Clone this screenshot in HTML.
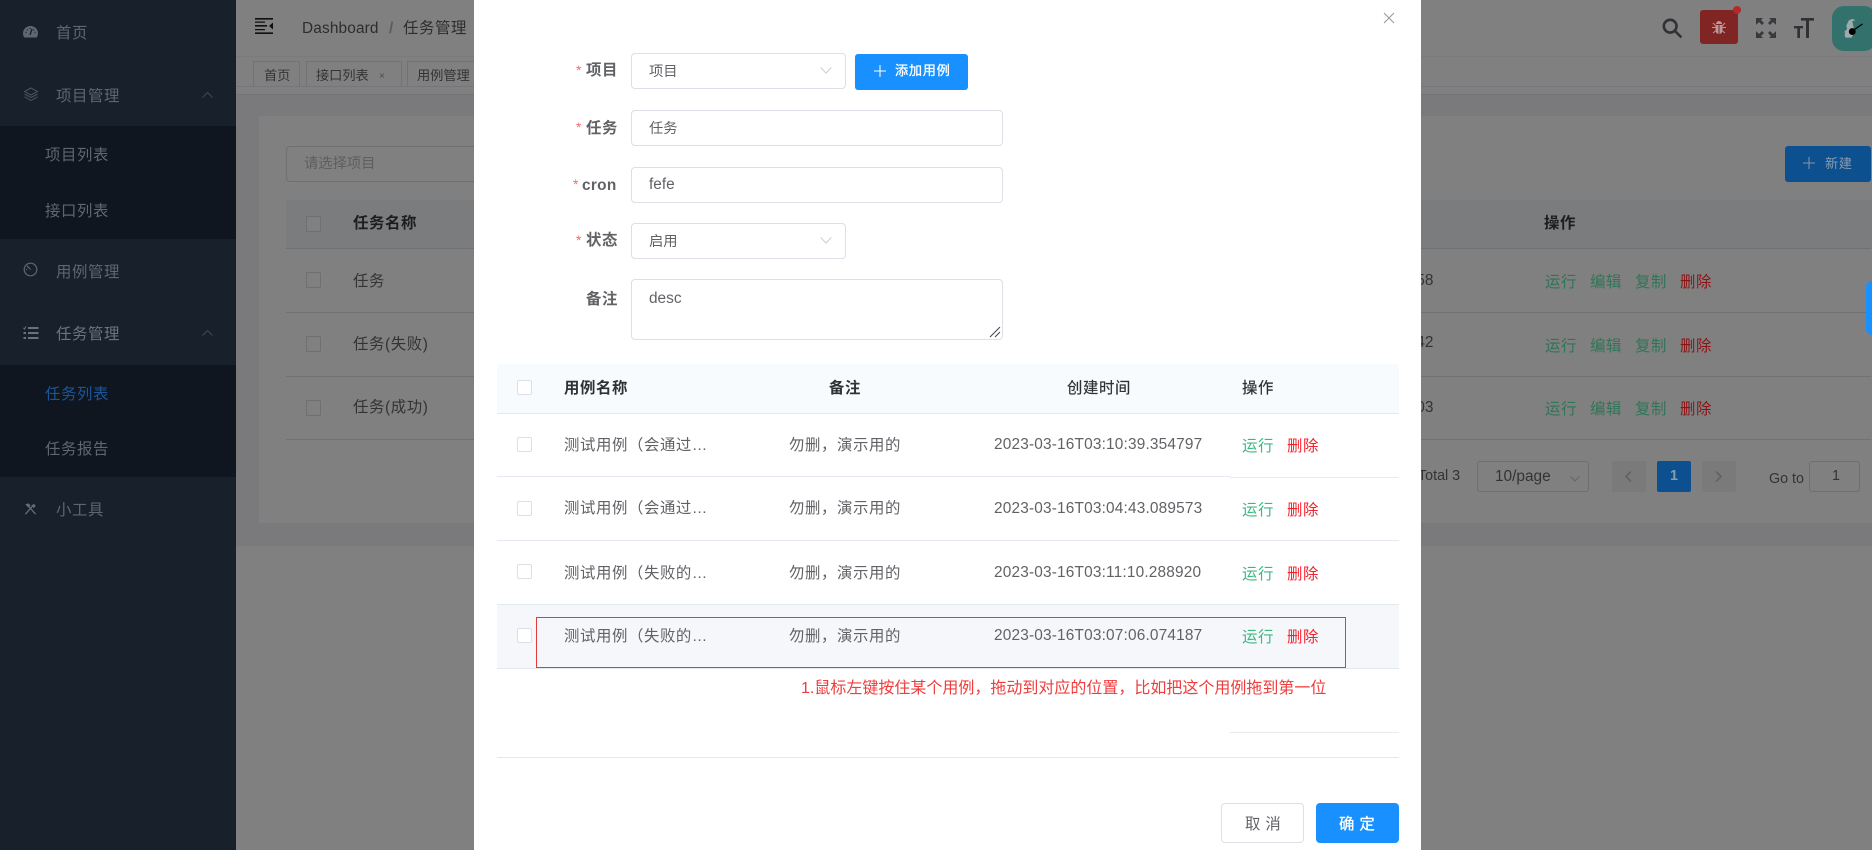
<!DOCTYPE html>
<html><head><meta charset="utf-8"><style>
*{box-sizing:border-box}
html,body{margin:0;padding:0;width:1872px;height:850px;overflow:hidden;background:#808080;font-family:"Liberation Sans","Noto Sans CJK SC",sans-serif}
.b{position:absolute}
.t{position:absolute;white-space:nowrap;line-height:20px;font-size:15.4px;letter-spacing:.6px}
.n{letter-spacing:0}
svg{position:absolute;overflow:visible}
.nav{color:#5e6670}
.cb{position:absolute;width:15px;height:16px;border:1px solid #6f6f73;border-radius:2px;background:#808080}
.mcb{position:absolute;width:15px;height:15px;border:1px solid #dcdfe6;border-radius:2px;background:#fff}
.g{color:#2f7558}.r{color:#8f1212}
.mg{color:#3cb87f}.mr{color:#f5222d}
.bt{color:#2d2d2e}
.m{color:#606266}
.d{letter-spacing:.18px}
.h{color:#303133;font-weight:700}
.inp{position:absolute;border:1px solid #dcdfe6;border-radius:4px;background:#fff}
.ml{color:#606266;font-weight:700}
.st{color:#f56c6c;font-size:14px;letter-spacing:0}
</style></head><body>

<!-- sidebar -->
<div class="b" style="left:0;top:0;width:236px;height:850px;background:#18202c"></div>
<div class="b" style="left:0;top:126px;width:236px;height:113px;background:#0f161f"></div>
<div class="b" style="left:0;top:365px;width:236px;height:112px;background:#0f161f"></div>
<svg style="left:23px;top:26px" width="15" height="12" viewBox="0 0 15 12"><path fill="#5f6770" d="M7.5 0C3.4 0 0 3.2 0 7.3c0 1.400.4 2.700 1 3.700.2.300.6.500 1 .500h11c.4 0 .8-.2 1-.5.600-1 1-2.300 1-3.700C15 3.200 11.600 0 7.500 0z"/><path stroke="#18202c" stroke-width="1.300" fill="none" d="M7 9 9 3M2.500 6.500h1M4 3.500l.7.700M7.200 2v1M11 3.500l-.7.700M12.500 6.500h-1"/></svg>
<div class="t nav" style="left:56px;top:24px">首页</div>
<svg style="left:24px;top:87px" width="14" height="15" viewBox="0 0 14 15" fill="none" stroke="#4a525c" stroke-width="1"><path d="M7 1 13.500 4.500 7 8 .5 4.500zM.5 7 7 10.500 13.500 7M.5 9.800 7 13.500l6.500-3.700"/></svg>
<div class="t nav" style="left:56px;top:87px">项目管理</div>
<svg style="left:202px;top:92px" width="11" height="6" viewBox="0 0 11 6" fill="none" stroke="#3f4751"><path d="M.5 5.500 5.500.5l5 5"/></svg>
<div class="t nav" style="left:45px;top:146px">项目列表</div>
<div class="t nav" style="left:45px;top:202px">接口列表</div>
<svg style="left:23px;top:262px" width="15" height="15" viewBox="0 0 15 15" fill="none" stroke="#5f6770" stroke-width="1.200"><circle cx="7.500" cy="7.500" r="6.300"/><path d="M4 3.800 7.500 7.500M3 7.500h1"/></svg>
<div class="t nav" style="left:56px;top:263px">用例管理</div>
<svg style="left:23px;top:326px" width="16" height="14" viewBox="0 0 16 14"><path fill="#6a727c" d="M5 1h10.500v2H5zM5 6h10.500v2H5zM5 11h10.500v2H5zM.5 6h2.500v2H.5zM.5 11h2.500v2H.5z"/><path fill="none" stroke="#6a727c" d="M.5 1.800 1.500 3 3 .5"/></svg>
<div class="t nav" style="left:56px;top:325px;color:#6c747f">任务管理</div>
<svg style="left:202px;top:330px" width="11" height="6" viewBox="0 0 11 6" fill="none" stroke="#3f4751"><path d="M.5 5.500 5.500.5l5 5"/></svg>
<div class="t" style="left:45px;top:385px;color:#1c5699">任务列表</div>
<div class="t nav" style="left:45px;top:440px">任务报告</div>
<svg style="left:24px;top:503px" width="13" height="12" viewBox="0 0 14 14" fill="none" stroke="#666e78" stroke-width="1.500"><path d="M1 13 9 4M13 13 4 3"/><path d="M1 1.500 5 .5 7 3 4 5zM8 3l3-2 2 2-2 3z" fill="#666e78" stroke="none"/></svg>
<div class="t nav" style="left:56px;top:501px">小工具</div>

<!-- topbar -->
<div class="b" style="left:236px;top:56px;width:1636px;height:1px;background:#7b7b7b"></div>
<svg style="left:255px;top:18px" width="18" height="16" viewBox="0 0 18 16"><path fill="#111" d="M0 0h18v1.600H0zM0 7h12v1.600H0zM0 14.400h18V16H0zM0 3.500h10v1.300H0zM0 11h10v1.300H0zM18 4.500v7l-4-3.500z"/></svg>
<div class="t bt" style="left:302px;top:19px;letter-spacing:.15px">Dashboard</div>
<div class="t n" style="left:389px;top:19px;color:#5c5c5e;font-weight:700">/</div>
<div class="t bt" style="left:403px;top:19px">任务管理</div>
<div class="b" style="left:236px;top:86px;width:1636px;height:1px;background:#767678"></div>
<div class="b" style="left:253px;top:61px;width:47px;height:26px;border:1px solid #737377;border-bottom:0"></div>
<div class="t n" style="left:264px;top:66px;font-size:13.200px;color:#343434">首页</div>
<div class="b" style="left:306px;top:61px;width:96px;height:26px;border:1px solid #737377;border-bottom:0"></div>
<div class="t n" style="left:316px;top:66px;font-size:13.200px;color:#343434">接口列表</div>
<div class="t n" style="left:379px;top:67px;font-size:10px;color:#4a4a4a">×</div>
<div class="b" style="left:407px;top:61px;width:80px;height:26px;border:1px solid #737377;border-bottom:0"></div>
<div class="t n" style="left:417px;top:66px;font-size:13.200px;color:#343434">用例管理</div>
<div class="b" style="left:236px;top:94px;width:1636px;height:1px;background:#727278"></div>
<div class="b" style="left:236px;top:95px;width:1636px;height:451px;background:#7a7a7c"></div>
<div class="b" style="left:259px;top:116px;width:1613px;height:407px;background:#808080"></div>

<!-- top right -->
<svg style="left:1662px;top:18px" width="20" height="20" viewBox="0 0 22 22" fill="none" stroke="#2f3135" stroke-width="2.800"><circle cx="9" cy="9" r="7"/><path d="M14 14l6.500 6.500" stroke-linecap="round"/></svg>
<div class="b" style="left:1700px;top:10px;width:38px;height:34px;background:#802424;border-radius:3px"></div>
<div class="b" style="left:1733px;top:6px;width:8px;height:8px;background:#b32a2a;border-radius:50%"></div>
<svg style="left:1712px;top:20px" width="14" height="14" viewBox="0 0 14 14"><path fill="#b89a9a" d="M4 4a3 3 0 0 1 6 0zM3.500 5h7v5.500a3.500 3.500 0 0 1-7 0z"/><path stroke="#b89a9a" fill="none" d="M0 7.500h3.500M10.500 7.500H14M1 3l2.500 2.500M13 3l-2.500 2.500M1 13l2.500-2M13 13l-2.500-2"/><path stroke="#802424" d="M7 5v9"/></svg>
<svg style="left:1756px;top:18px" width="20" height="20" viewBox="0 0 20 20" fill="#37393d"><path d="M0 0h7L5 2l3 3-2 2-3-3-2.500 2.500H0zM20 0h-7l2 2-3 3 2 2 3-3 2.500 2.500H20zM0 20h7l-2-2 3-3-2-2-3 3-2.500-2.500H0zM20 20h-7l2-2-3-3 2-2 3 3 2.500-2.500H20z"/></svg>
<svg style="left:1794px;top:18px" width="20" height="20" viewBox="0 0 20 20" fill="#2f3135"><path d="M7 0h13v2.600h-5V20h-3V2.600H7zM0 8h9v2.400H6V20H3.300v-9.600H0z"/></svg>
<div class="b" style="left:1832px;top:6px;width:44px;height:45px;background:#33716d;border-radius:12px"></div>
<svg style="left:1842px;top:18px" width="24" height="22" viewBox="0 0 28 24"><path fill="#9fabaa" d="M8 2c3-2 7-2 7 0l-3 1 1 4 1 7-1 5-2 3H4l-1-3 1-3H2l2-2 2-2-1-4z"/><circle cx="12" cy="15" r="4" fill="#000"/><path stroke="#000" stroke-width="1.400" d="M14 13 24 6"/></svg>

<!-- search -->
<div class="b" style="left:286px;top:146px;width:300px;height:36px;border:1px solid #707074;border-radius:4px"></div>
<div class="t n" style="left:304px;top:154px;font-size:14.300px;color:#5e5e60">请选择项目</div>
<div class="b" style="left:1785px;top:146px;width:86px;height:36px;background:#0c5090;border-radius:3px"></div>
<svg style="left:1803px;top:157px" width="12" height="12" viewBox="0 0 12 12" stroke="#8496a8" stroke-width="1"><path d="M6 0v12M0 6h12"/></svg>
<div class="t" style="left:1825px;top:154px;font-size:13.200px;color:#8a9bad">新建</div>

<!-- bg table -->
<div class="b" style="left:286px;top:200px;width:1586px;height:48px;background:#7b7c7e"></div>
<div class="b" style="left:286px;top:248px;width:1585px;height:1px;background:#6f7074"></div>
<div class="b" style="left:286px;top:312px;width:1585px;height:1px;background:#727276"></div>
<div class="b" style="left:286px;top:376px;width:1585px;height:1px;background:#727276"></div>
<div class="b" style="left:286px;top:439px;width:1585px;height:1px;background:#727276"></div>
<div class="cb" style="left:306px;top:216px"></div><div class="cb" style="left:306px;top:272px"></div><div class="cb" style="left:306px;top:336px"></div><div class="cb" style="left:306px;top:400px"></div>
<div class="t" style="left:353px;top:214px;font-weight:700;color:#1d1d1e">任务名称</div>
<div class="t" style="left:353px;top:272px;color:#333">任务</div>
<div class="t" style="left:353px;top:335px;color:#333">任务(失败)</div>
<div class="t" style="left:353px;top:398px;color:#333">任务(成功)</div>
<div class="t n" style="left:1412px;top:271px;color:#333">.58</div>
<div class="t n" style="left:1412px;top:333px;color:#333">.42</div>
<div class="t n" style="left:1412px;top:398px;color:#333">.03</div>
<div class="t" style="left:1544px;top:214px;font-weight:700;color:#1d1d1e">操作</div>
<div class="t g" style="left:1545px;top:273px">运行</div><div class="t g" style="left:1590px;top:273px">编辑</div><div class="t g" style="left:1635px;top:273px">复制</div><div class="t r" style="left:1680px;top:273px">删除</div>
<div class="t g" style="left:1545px;top:337px">运行</div><div class="t g" style="left:1590px;top:337px">编辑</div><div class="t g" style="left:1635px;top:337px">复制</div><div class="t r" style="left:1680px;top:337px">删除</div>
<div class="t g" style="left:1545px;top:400px">运行</div><div class="t g" style="left:1590px;top:400px">编辑</div><div class="t g" style="left:1635px;top:400px">复制</div><div class="t r" style="left:1680px;top:400px">删除</div>

<!-- pagination -->
<div class="t n" style="left:1418px;top:466px;font-size:14.300px;color:#333">Total 3</div>
<div class="b" style="left:1477px;top:461px;width:112px;height:31px;border:1px solid #6f6f73;border-radius:3px"></div>
<div class="t n" style="left:1495px;top:467px;color:#333">10/page</div>
<svg style="left:1570px;top:476px" width="10" height="6" viewBox="0 0 10 6" fill="none" stroke="#656569"><path d="M.5.5 5 5 9.500.5"/></svg>
<div class="b" style="left:1612px;top:461px;width:34px;height:31px;background:#7a7a7a;border-radius:2px"></div>
<svg style="left:1625px;top:471px" width="7" height="11" viewBox="0 0 7 11" fill="none" stroke="#5f5f63" stroke-width="1.500"><path d="M6 .5 1 5.500 6 10.500"/></svg>
<div class="b" style="left:1657px;top:461px;width:34px;height:31px;background:#0c5090;border-radius:2px"></div>
<div class="t n" style="left:1670px;top:466px;font-size:14.300px;font-weight:700;color:#8a9bad">1</div>
<div class="b" style="left:1702px;top:461px;width:34px;height:31px;background:#7a7a7a;border-radius:2px"></div>
<svg style="left:1715px;top:471px" width="7" height="11" viewBox="0 0 7 11" fill="none" stroke="#5f5f63" stroke-width="1.500"><path d="M1 .5 6 5.500 1 10.500"/></svg>
<div class="t n" style="left:1769px;top:469px;font-size:14.300px;color:#333">Go to</div>
<div class="b" style="left:1809px;top:461px;width:51px;height:31px;border:1px solid #6f6f73;border-radius:3px"></div>
<div class="t n" style="left:1832px;top:466px;font-size:14.300px;color:#333">1</div>

<div class="b" style="left:1866px;top:281px;width:6px;height:54px;background:#1890ff;border-radius:6px 0 0 6px"></div>

<!-- modal -->
<div class="b" style="left:474px;top:0;width:947px;height:850px;background:#fff"></div>
<svg style="left:1384px;top:13px" width="10" height="10" viewBox="0 0 11 11" stroke="#909399" stroke-width="1"><path d="M0 0l11 11M11 0 0 11"/></svg>

<div class="t st" style="left:576px;top:60px">*</div><div class="t ml" style="left:586px;top:61px">项目</div>
<div class="t st" style="left:576px;top:117px">*</div><div class="t ml" style="left:586px;top:119px">任务</div>
<div class="t st" style="left:573px;top:174px">*</div><div class="t ml" style="left:582px;top:176px;letter-spacing:.3px">cron</div>
<div class="t st" style="left:576px;top:230px">*</div><div class="t ml" style="left:586px;top:231px">状态</div>
<div class="t ml" style="left:586px;top:290px">备注</div>

<div class="inp" style="left:631px;top:53px;width:215px;height:36px"></div>
<div class="t m n" style="left:649px;top:62px;font-size:14.300px">项目</div>
<svg style="left:820px;top:67px" width="12" height="7" viewBox="0 0 13 8" fill="none" stroke="#c0c4cc" stroke-width="1"><path d="M.5.5 6.500 7 12.500.5"/></svg>
<div class="b" style="left:855px;top:54px;width:113px;height:36px;background:#1890ff;border-radius:3px"></div>
<svg style="left:874px;top:65px" width="12" height="12" viewBox="0 0 12 12" stroke="#fff" stroke-width="1"><path d="M6 0v12M0 6h12"/></svg>
<div class="t" style="left:895px;top:61px;font-size:13.200px;color:#fff;letter-spacing:.7px;-webkit-text-stroke:.3px #fff">添加用例</div>

<div class="inp" style="left:631px;top:110px;width:372px;height:36px"></div>
<div class="t m n" style="left:649px;top:119px;font-size:14.300px">任务</div>
<div class="inp" style="left:631px;top:167px;width:372px;height:36px"></div>
<div class="t m n" style="left:649px;top:175px">fefe</div>
<div class="inp" style="left:631px;top:223px;width:215px;height:36px"></div>
<div class="t m n" style="left:649px;top:232px;font-size:14.300px">启用</div>
<svg style="left:820px;top:237px" width="12" height="7" viewBox="0 0 13 8" fill="none" stroke="#c0c4cc" stroke-width="1"><path d="M.5.5 6.500 7 12.500.5"/></svg>
<div class="inp" style="left:631px;top:279px;width:372px;height:61px"></div>
<div class="t m n" style="left:649px;top:289px">desc</div>
<svg style="left:989px;top:326px" width="12" height="12" viewBox="0 0 12 12" stroke="#444" stroke-width="1"><path d="M1 11 11 1M6 11l5-5"/></svg>

<!-- modal table -->
<div class="b" style="left:497px;top:364px;width:902px;height:49px;background:#f8fbfe"></div>
<div class="b" style="left:497px;top:413px;width:902px;height:1px;background:#e4e9f0"></div>
<div class="b" style="left:497px;top:476px;width:733px;height:1px;background:#e6e9ef"></div>
<div class="b" style="left:1230px;top:477px;width:169px;height:1px;background:#e6e9ef"></div>
<div class="b" style="left:497px;top:540px;width:902px;height:1px;background:#e6e9ef"></div>
<div class="b" style="left:497px;top:604px;width:902px;height:1px;background:#e4e9f0"></div>
<div class="b" style="left:497px;top:605px;width:902px;height:63px;background:#f5f7fb"></div>
<div class="b" style="left:497px;top:668px;width:902px;height:1px;background:#e4e9f0"></div>
<div class="b" style="left:1230px;top:732px;width:169px;height:1px;background:#e8eaf0"></div>
<div class="b" style="left:497px;top:757px;width:902px;height:1px;background:#e6e8ee"></div>

<div class="mcb" style="left:517px;top:380px"></div><div class="mcb" style="left:517px;top:437px"></div><div class="mcb" style="left:517px;top:501px"></div><div class="mcb" style="left:517px;top:564px"></div><div class="mcb" style="left:517px;top:628px"></div>
<div class="t h" style="left:564px;top:379px">用例名称</div>
<div class="t h" style="left:829px;top:379px">备注</div>
<div class="t h" style="left:1067px;top:379px;font-weight:400;-webkit-text-stroke:.2px #303133">创建时间</div>
<div class="t h" style="left:1242px;top:379px;font-weight:400;-webkit-text-stroke:.2px #303133">操作</div>

<div class="t m" style="left:564px;top:436px">测试用例（会通过…</div>
<div class="t m" style="left:789px;top:436px">勿删，演示用的</div>
<div class="t m d" style="left:994px;top:435px">2023-03-16T03:10:39.354797</div>
<div class="t mg" style="left:1242px;top:437px">运行</div><div class="t mr" style="left:1287px;top:437px">删除</div>

<div class="t m" style="left:564px;top:499px">测试用例（会通过…</div>
<div class="t m" style="left:789px;top:499px">勿删，演示用的</div>
<div class="t m d" style="left:994px;top:499px">2023-03-16T03:04:43.089573</div>
<div class="t mg" style="left:1242px;top:501px">运行</div><div class="t mr" style="left:1287px;top:501px">删除</div>

<div class="t m" style="left:564px;top:564px">测试用例（失败的…</div>
<div class="t m" style="left:789px;top:564px">勿删，演示用的</div>
<div class="t m d" style="left:994px;top:563px">2023-03-16T03:11:10.288920</div>
<div class="t mg" style="left:1242px;top:565px">运行</div><div class="t mr" style="left:1287px;top:565px">删除</div>

<div class="t m" style="left:564px;top:627px">测试用例（失败的…</div>
<div class="t m" style="left:789px;top:627px">勿删，演示用的</div>
<div class="t m d" style="left:994px;top:626px">2023-03-16T03:07:06.074187</div>
<div class="t mg" style="left:1242px;top:628px">运行</div><div class="t mr" style="left:1287px;top:628px">删除</div>

<div class="b" style="left:536px;top:617px;width:810px;height:51px;border:1px solid #e53a3a"></div>
<div class="t n" style="left:801px;top:679px;font-size:16px;color:#f03c3c">1.鼠标左键按住某个用例，拖动到对应的位置，比如把这个用例拖到第一位</div>

<div class="b" style="left:1221px;top:803px;width:83px;height:40px;border:1px solid #dcdfe6;border-radius:4px;background:#fff"></div>
<div class="t m" style="left:1245px;top:815px;font-size:15.400px;letter-spacing:5px">取消</div>
<div class="b" style="left:1316px;top:803px;width:83px;height:40px;background:#1890ff;border-radius:4px"></div>
<div class="t" style="left:1339px;top:815px;font-size:15.400px;letter-spacing:5px;color:#fff;-webkit-text-stroke:.3px #fff">确定</div>
</body></html>
